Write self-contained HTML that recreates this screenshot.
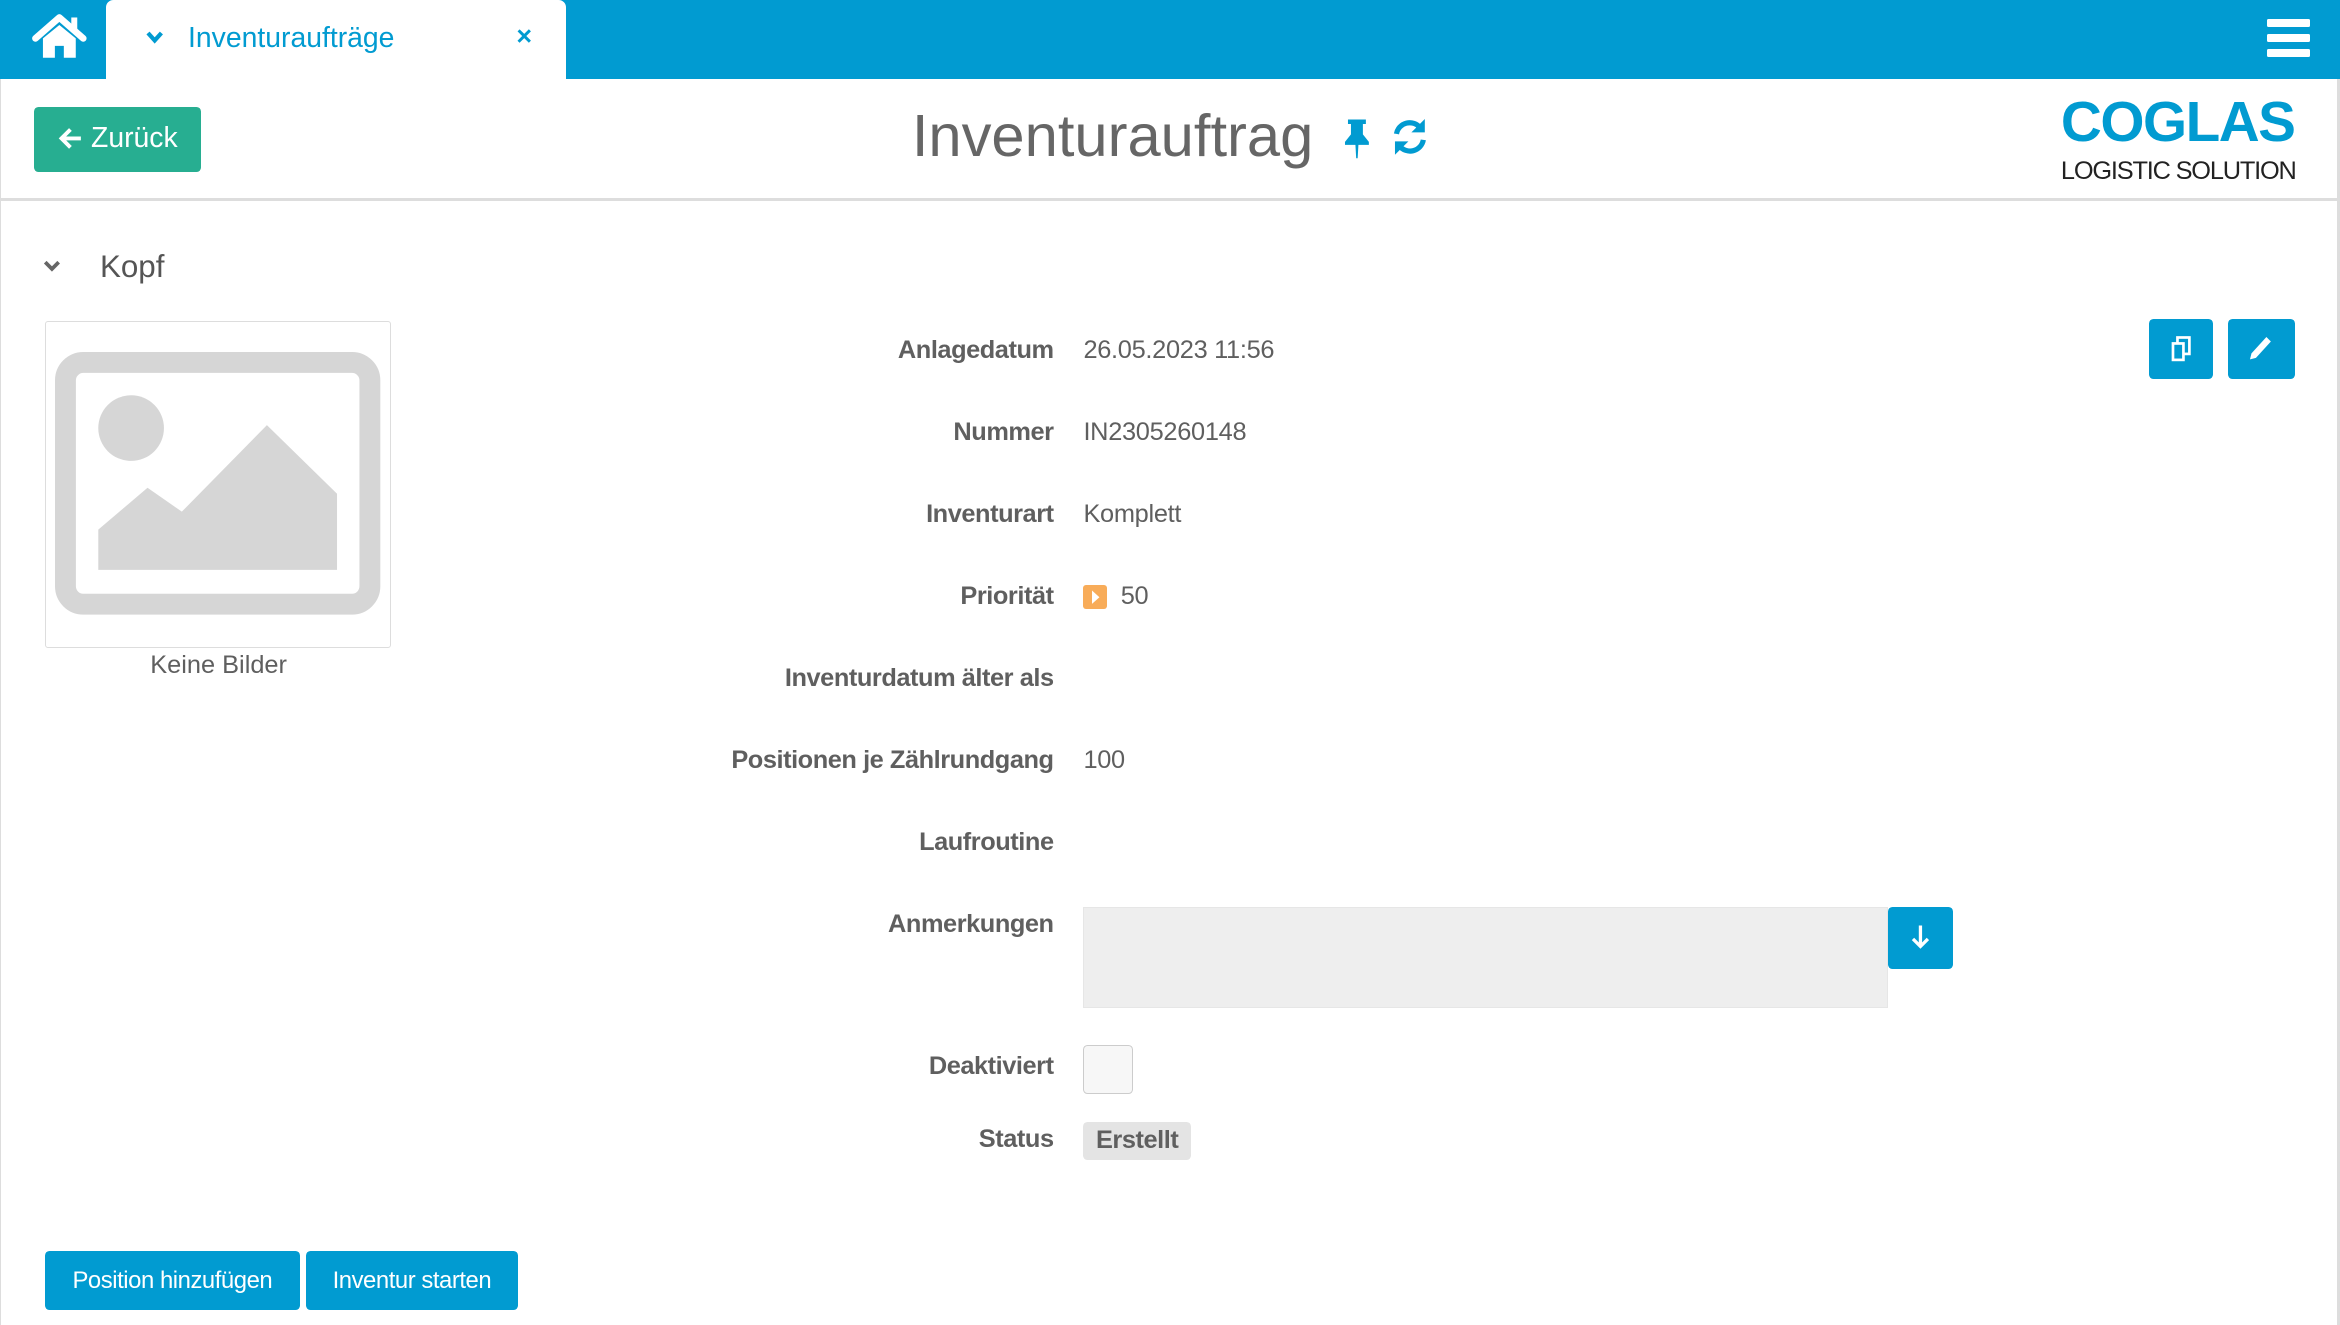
<!DOCTYPE html>
<html><head><meta charset="utf-8"><style>
html,body{margin:0;padding:0;background:#fff;overflow:hidden}
body{width:2340px;height:1325px}
#w{zoom:1.49235;position:relative;width:1568px;height:888px;font-family:"Liberation Sans",sans-serif;color:#555}
.a{position:absolute}
.lbl{position:absolute;right:862px;font-weight:bold;font-size:17px;color:#5f5f5f;white-space:nowrap;line-height:20px;letter-spacing:-0.3px}
.val{position:absolute;left:726px;font-size:17px;color:#5f5f5f;line-height:20px;letter-spacing:-0.2px}
.btn{position:absolute;background:#019bd1;color:#fff;border-radius:3px;font-size:16px;text-align:center}
</style></head><body><div id="w">
<div class="a" style="left:0;top:0;width:1568px;height:53px;background:#019bd1"></div>
<svg class="a" style="left:21px;top:9px" width="38" height="32" viewBox="0 0 38 32"><path d="M3 17 L19 3 L35 17" stroke="#fff" stroke-width="4.5" fill="none" stroke-linecap="round" stroke-linejoin="round"/><path d="M8 17 L19 8 L30 17 V30 H22 V22 H16 V30 H8Z" fill="#fff"/><rect x="27" y="3" width="4" height="9" fill="#fff"/></svg>
<div class="a" style="left:71px;top:0;width:308px;height:53px;background:#fff;border-radius:5px 5px 0 0"></div>
<svg class="a" style="left:97px;top:20px" width="13" height="10"><path d="M2 2 L6.5 7 L11 2" stroke="#019bd1" stroke-width="2.8" fill="none"/></svg>
<div class="a" style="left:126px;top:15px;font-size:19px;color:#019bd1">Inventuraufträge</div>
<div class="a" style="left:346px;top:14px;font-size:18px;color:#019bd1;font-weight:bold">×</div>
<div class="a" style="left:1519px;top:13px;width:29px;height:5px;background:#fff;border-radius:1px"></div>
<div class="a" style="left:1519px;top:23px;width:29px;height:5px;background:#fff;border-radius:1px"></div>
<div class="a" style="left:1519px;top:33px;width:29px;height:5px;background:#fff;border-radius:1px"></div>
<div class="a" style="left:0;top:53px;width:1px;height:835px;background:#ddd"></div>
<div class="a" style="left:1566px;top:53px;width:2px;height:835px;background:#ddd"></div>
<div class="a" style="left:0;top:133px;width:1568px;height:2px;background:#ddd"></div>
<div class="a" style="left:23px;top:72px;width:112px;height:43px;background:#27ae91;border-radius:3px"></div>
<svg class="a" style="left:38px;top:84px" width="18" height="18" viewBox="0 0 18 18"><path d="M16 9 H3 M9 3 L3 9 L9 15" stroke="#fff" stroke-width="2.6" fill="none"/></svg>
<div class="a" style="left:61px;top:82px;font-size:19px;color:#fff;line-height:22px">Zurück</div>
<div class="a" style="left:611px;top:68px;font-size:40px;color:#666;font-weight:300">Inventurauftrag</div>
<svg class="a" style="left:899px;top:79px" width="20" height="28" viewBox="0 0 20 28"><path d="M4 1 H16 V4 H14 V11 L18 16 V18 H2 V16 L6 11 V4 H4Z M9 18 H11 L10.5 27 H9.5Z" fill="#019bd1"/></svg>
<svg class="a" style="left:931px;top:78px" width="28" height="28" viewBox="0 0 28 28"><path d="M5 12 A9 9 0 0 1 21 8" stroke="#019bd1" stroke-width="3.5" fill="none"/><path d="M24 2 V11 H15Z" fill="#019bd1"/><path d="M23 16 A9 9 0 0 1 7 20" stroke="#019bd1" stroke-width="3.5" fill="none"/><path d="M4 26 V17 H13Z" fill="#019bd1"/></svg>
<div class="a" style="left:1381px;top:60px;font-size:38px;font-weight:bold;color:#019bd1;letter-spacing:-1px">COGLAS</div>
<div class="a" style="left:1381px;top:105px;font-size:17px;color:#222;letter-spacing:-0.8px">LOGISTIC SOLUTION</div>
<svg class="a" style="left:29px;top:174px" width="12" height="9"><path d="M1.5 1.5 L6 6 L10.5 1.5" stroke="#666" stroke-width="2.5" fill="none"/></svg>
<div class="a" style="left:67px;top:167px;font-size:21px;color:#555">Kopf</div>
<div class="a" style="left:30px;top:215px;width:231px;height:218px;border:1px solid #ddd;border-radius:2px"></div>
<svg class="a" style="left:37px;top:236px" width="218" height="176" viewBox="0 0 218 176"><rect x="7" y="7" width="204" height="162" rx="12" fill="none" stroke="#d6d6d6" stroke-width="14"/><circle cx="51" cy="51" r="22" fill="#d6d6d6"/><path d="M29 146 V119 L62 91 L85 107 L142 49 L189 95 V146Z" fill="#d6d6d6"/></svg>
<div class="a" style="left:30px;top:436px;width:233px;text-align:center;font-size:17px;color:#5f5f5f">Keine Bilder</div>
<div class="lbl" style="top:225px">Anlagedatum</div><div class="val" style="top:225px">26.05.2023 11:56</div>
<div class="lbl" style="top:280px">Nummer</div><div class="val" style="top:280px">IN2305260148</div>
<div class="lbl" style="top:335px">Inventurart</div><div class="val" style="top:335px">Komplett</div>
<div class="lbl" style="top:390px">Priorität</div>
<div class="a" style="left:726px;top:392px;width:16px;height:16px;background:#f8ac59;border-radius:2px"></div>
<svg class="a" style="left:730px;top:395px" width="10" height="11"><path d="M2 1 L7 5.5 L2 10Z" fill="#fff"/></svg>
<div class="val" style="top:390px;left:751px">50</div>
<div class="lbl" style="top:445px">Inventurdatum älter als</div>
<div class="lbl" style="top:500px">Positionen je Zählrundgang</div><div class="val" style="top:500px">100</div>
<div class="lbl" style="top:555px">Laufroutine</div>
<div class="lbl" style="top:610px">Anmerkungen</div>
<div class="a" style="left:726px;top:608px;width:538px;height:66px;background:#eee;border:1px solid #e6e6e6"></div>
<div class="btn" style="left:1265px;top:608px;width:44px;height:41px"></div>
<svg class="a" style="left:1280px;top:619px" width="14" height="18"><path d="M7 1 V15 M2 10 L7 15 L12 10" stroke="#fff" stroke-width="2.2" fill="none"/></svg>
<div class="lbl" style="top:705px">Deaktiviert</div>
<div class="a" style="left:726px;top:700px;width:32px;height:32px;background:#f7f7f7;border:1px solid #ccc;border-radius:3px"></div>
<div class="lbl" style="top:754px">Status</div>
<div class="a" style="left:726px;top:752px;width:72px;height:25px;background:#e4e4e4;border-radius:3px;font-weight:bold;font-size:17px;color:#5f5f5f;text-align:center;line-height:25px;letter-spacing:-0.3px">Erstellt</div>
<div class="btn" style="left:1440px;top:214px;width:43px;height:40px"></div>
<svg class="a" style="left:1454px;top:225px" width="16" height="18"><rect x="5" y="1" width="8" height="11" fill="none" stroke="#fff" stroke-width="1.8"/><rect x="2" y="5" width="7" height="11" fill="#019bd1" stroke="#fff" stroke-width="1.8"/></svg>
<div class="btn" style="left:1493px;top:214px;width:45px;height:40px"></div>
<svg class="a" style="left:1506px;top:224px" width="18" height="20"><path d="M13 2 L16 5 L6 16 L2 17 L3 13Z" fill="#fff"/></svg>
<div class="btn" style="left:30px;top:838px;width:171px;height:40px;line-height:40px;letter-spacing:-0.3px">Position hinzufügen</div>
<div class="btn" style="left:205px;top:838px;width:142px;height:40px;line-height:40px;letter-spacing:-0.3px">Inventur starten</div>
</div></body></html>
